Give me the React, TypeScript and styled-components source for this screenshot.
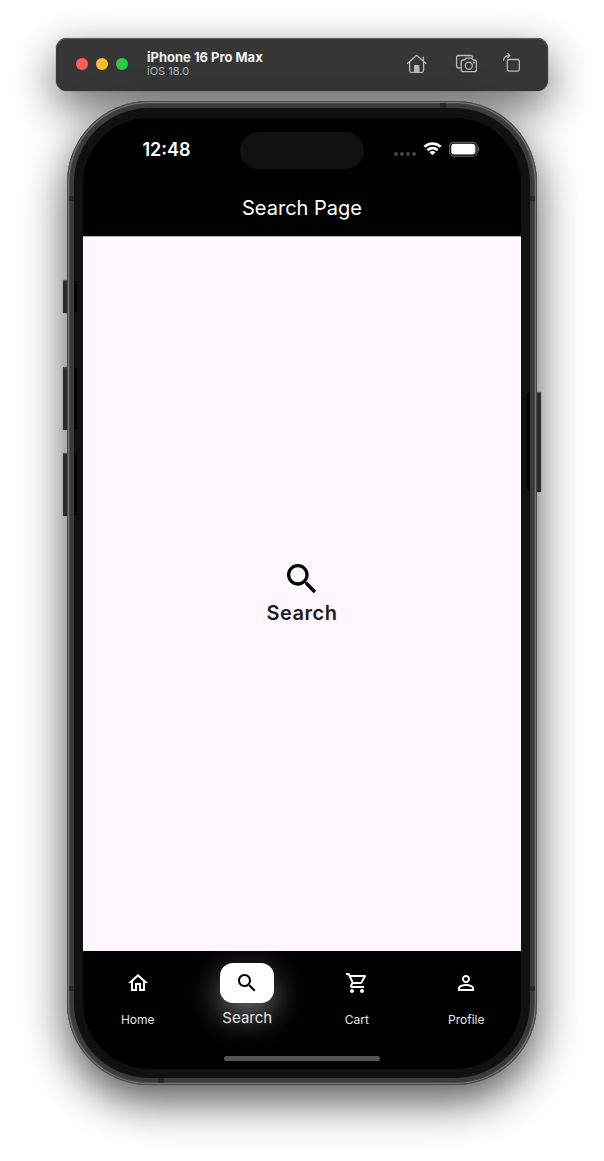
import React, { useState } from "react";
import styled, { createGlobalStyle, css } from "styled-components";

const GlobalStyle = createGlobalStyle`
  * { box-sizing: border-box; }
  body {
    margin: 0;
    background: #fff;
    font-family: Inter, "Liberation Sans", sans-serif;
  }
  button { font: inherit; color: inherit; background: none; border: 0; padding: 0; cursor: pointer; }
`;

const Page = styled.div`
  display: flex;
  flex-direction: column;
  min-height: 100vh;
  padding: 38px 56px 76px;
  overflow: hidden;
`;

const WindowBar = styled.header`
  display: flex;
  align-items: center;
  height: 53px;
  padding: 0 20px 2px;
  border-radius: 11px;
  background: #363636;
  box-shadow: inset 0 1px 1px #6a6a6a, 0 0 1px #222, 0 16px 44px rgba(0, 0, 0, 0.6);
`;

const Lights = styled.div`
  display: flex;
  gap: 8px;
  margin-right: 19px;
`;

const Light = styled.button<{ $color: string }>`
  width: 12px;
  height: 12px;
  border-radius: 50%;
  background: ${(p) => p.$color};
`;

const Device = styled.div`
  flex: 1;
`;

const DeviceName = styled.h1`
  margin: 0;
  font-size: 13px;
  line-height: 16px;
  font-weight: 700;
  color: #f2f2f2;
`;

const DeviceSystem = styled.p`
  margin: 0;
  font-size: 11px;
  line-height: 13px;
  color: #b4b4b4;
`;

const Tools = styled.div`
  display: flex;
  gap: 24px;
  color: #b9b9b9;
`;

const Tool = styled.button`
  display: flex;
`;

const Phone = styled.main`
  position: relative;
  flex: 1;
  display: flex;
  margin: 10px 11px 0;
  padding: 7px;
  border-radius: 82px;
  background: #3b3b3b;
  box-shadow: inset 0 0 0 1px #4a4a4a, inset 0 0 0 2px #777, inset 0 0 0 3px #484848,
    0 16px 44px rgba(0, 0, 0, 0.68);
`;

const Bezel = styled.div`
  flex: 1;
  display: flex;
  padding: 10px 9px 9px;
  border-radius: 75px;
  background: #111;
`;

const Screen = styled.div`
  position: relative;
  flex: 1;
  display: flex;
  flex-direction: column;
  border-radius: 66px;
  overflow: hidden;
  background: #000;
  color: #fff;
`;

const SideButton = styled.span<{ $side: "left" | "right"; $top: number; $length: number }>`
  position: absolute;
  ${(p) => p.$side}: -4px;
  top: ${(p) => p.$top}px;
  width: 4px;
  height: ${(p) => p.$length}px;
  border-radius: 1px;
  background: #2a2a2a;
  box-shadow: inset 0 1px 1px #555, 0 0 1px #333;

  &::after {
    content: "";
    position: absolute;
    top: 1px;
    bottom: 1px;
    ${(p) => p.$side}: 11px;
    width: 3px;
    background: #000;
  }
`;

const Antenna = styled.span<{ $edge: "left" | "right" | "top" | "bottom"; $at: string }>`
  position: absolute;
  background: rgba(32, 32, 32, 0.7);
  ${(p) => p.$edge}: 2px;
  ${(p) =>
    p.$edge === "left" || p.$edge === "right"
      ? css`
          top: ${p.$at};
          width: 5px;
          height: 5px;
        `
      : css`
          left: ${p.$at};
          width: 6px;
          height: 5px;
        `}
`;

const StatusBar = styled.div`
  display: grid;
  grid-template-columns: 1fr 124px 1fr;
  align-items: center;
  height: 62px;
  padding: 2px 0 0;
`;

const Time = styled.time`
  padding-left: 10px;
  text-align: center;
  font-size: 18px;
  line-height: 20px;
  font-weight: 600;
`;

const Island = styled.div`
  height: 37px;
  border-radius: 19px;
  background: #111;
`;

const StatusIcons = styled.div`
  display: flex;
  align-items: center;
  justify-content: center;
  gap: 7px;
  padding: 0 12px 2px 0;
`;

const AppBar = styled.h2`
  margin: 0;
  text-align: center;
  font-size: 20px;
  line-height: 56px;
  font-weight: 400;
`;

const Content = styled.section`
  flex: 1;
  display: flex;
  flex-direction: column;
  align-items: center;
  justify-content: center;
  padding-bottom: 2px;
  background: #fef7ff;
  color: #1d1b20;
  border-top: 1px solid #b3aeb4;
`;

const ContentLabel = styled.p`
  margin: 0;
  font-size: 20px;
  line-height: 28px;
  font-weight: 600;
  letter-spacing: 0.5px;
`;

const BottomBar = styled.footer`
  display: flex;
  flex-direction: column;
  align-items: center;
  justify-content: space-between;
  height: 118px;
  padding: 12px 0 8px;
`;

const Tabs = styled.nav`
  display: flex;
  align-self: stretch;
`;

const Tab = styled.button`
  flex: 1;
  display: flex;
  flex-direction: column;
  align-items: center;
`;

const TabIcon = styled.span<{ $active: boolean }>`
  display: flex;
  align-items: center;
  justify-content: center;
  width: 54px;
  height: 40px;
  border-radius: 13px;
  ${(p) =>
    p.$active &&
    css`
      background: #fff;
      color: #000;
      box-shadow: 0 12px 32px rgba(255, 255, 255, 0.45);
    `}
`;

const TabLabel = styled.span<{ $active: boolean }>`
  position: relative;
  font-size: ${(p) => (p.$active ? 15 : 12)}px;
  line-height: ${(p) => (p.$active ? 30 : 34)}px;
  color: #e6e6e6;
`;

const HomeIndicator = styled.div`
  width: 156px;
  height: 5px;
  border-radius: 3px;
  background: #555;
`;

const SEARCH =
  "M15.5 14h-.79l-.28-.27C15.41 12.59 16 11.11 16 9.5 16 5.91 13.09 3 9.5 3S3 5.91 3 9.5 5.91 16 9.5 16c1.61 0 3.09-.59 4.23-1.57l.27.28v.79l5 4.99L20.49 19l-4.99-5zm-6 0C7.01 14 5 11.99 5 9.5S7.01 5 9.5 5 14 7.01 14 9.5 11.99 14 9.5 14z";

const TABS = [
  { label: "Home", path: "M12 5.69l5 4.5V18h-2v-6H9v6H7v-7.81l5-4.5M12 3L2 12h3v8h6v-6h2v6h6v-8h3L12 3z" },
  { label: "Search", path: SEARCH },
  {
    label: "Cart",
    path: "M15.55 13c.75 0 1.41-.41 1.75-1.03l3.58-6.49c.37-.66-.11-1.48-.87-1.48H5.21l-.94-2H1v2h2l3.6 7.59-1.35 2.44C4.52 15.37 5.48 17 7 17h12v-2H7l1.1-2h7.45zM6.16 6h12.15l-2.76 5H8.53L6.16 6zM7 18c-1.1 0-1.99.9-1.99 2S5.9 22 7 22s2-.9 2-2-.9-2-2-2zm10 0c-1.1 0-1.99.9-1.99 2s.89 2 1.99 2 2-.9 2-2-.9-2-2-2z",
  },
  {
    label: "Profile",
    path: "M12 5.9c1.16 0 2.1.94 2.1 2.1s-.94 2.1-2.1 2.1S9.9 9.16 9.9 8s.94-2.1 2.1-2.1m0 9c2.97 0 6.1 1.46 6.1 2.1v1.1H5.9V17c0-.64 3.13-2.1 6.1-2.1M12 4C9.79 4 8 5.79 8 8s1.79 4 4 4 4-1.79 4-4-1.79-4-4-4zm0 9c-2.67 0-8 1.34-8 4v3h16v-3c0-2.66-5.33-4-8-4z",
  },
];

const Glyph = ({ path, size = 24, fill = "currentColor" }: { path: string; size?: number; fill?: string }) => (
  <svg width={size} height={size} viewBox="0 0 24 24" fill={fill} aria-hidden="true">
    <path d={path} />
  </svg>
);

const ToolGlyph = ({ children }: { children: React.ReactNode }) => (
  <svg
    width="26"
    height="24"
    viewBox="0 0 26 24"
    fill="none"
    stroke="currentColor"
    strokeWidth="1.3"
    strokeLinecap="round"
    strokeLinejoin="round"
    aria-hidden="true"
  >
    {children}
  </svg>
);

export default function App() {
  const [active, setActive] = useState("Search");
  return (
    <>
      <GlobalStyle />
      <Page>
        <WindowBar>
          <Lights>
            <Light $color="#ff5f57" aria-label="Close" />
            <Light $color="#febc2e" aria-label="Minimize" />
            <Light $color="#28c840" aria-label="Zoom" />
          </Lights>
          <Device>
            <DeviceName>iPhone 16 Pro Max</DeviceName>
            <DeviceSystem>iOS 18.0</DeviceSystem>
          </Device>
          <Tools>
            <Tool aria-label="Home">
              <ToolGlyph>
                <path d="M5.4 11.4 14 3.7q.6-.5 1.2 0l8.7 7.7M7.6 9.6v9.2q0 1.5 1.5 1.5h11q1.5 0 1.5-1.5V9.6M21.4 8.6V5.2" />
                <path d="M12.6 20v-6.3h4.2V20z" fill="currentColor" />
              </ToolGlyph>
            </Tool>
            <Tool aria-label="Screenshot">
              <ToolGlyph>
                <path d="M8.2 16H6.8q-2.2 0-2.2-2.2V5.7q0-2.2 2.2-2.2h11.6q2 0 2.2 2" />
                <path d="M11.2 8h1.2l1-1.2q.5-.6 1.3-.6h4.2q.8 0 1.3.6l1 1.2h1.2q2 0 2 2v7.7q0 2-2 2H11.2q-2 0-2-2V10q0-2 2-2z" />
                <circle cx="16.8" cy="13.7" r="3.5" />
                <circle cx="21.9" cy="10.6" r=".4" />
              </ToolGlyph>
            </Tool>
            <Tool aria-label="Rotate">
              <ToolGlyph>
                <rect x="5.3" y="7.5" width="12" height="11.6" rx="1.8" />
                <path d="M1.6 8.3Q1.8 3.6 7.6 3.6M5.8 1.6l2.1 2-2.1 2" />
              </ToolGlyph>
            </Tool>
          </Tools>
        </WindowBar>

        <Phone>
          <SideButton $side="left" $top={179} $length={33} />
          <SideButton $side="left" $top={266} $length={63} />
          <SideButton $side="left" $top={352} $length={63} />
          <SideButton $side="right" $top={291} $length={100} />
          <Antenna $edge="left" $at="95px" />
          <Antenna $edge="right" $at="95px" />
          <Antenna $edge="left" $at="calc(100% - 99px)" />
          <Antenna $edge="right" $at="calc(100% - 99px)" />
          <Antenna $edge="top" $at="calc(100% - 97px)" />
          <Antenna $edge="bottom" $at="91px" />
          <Bezel>
            <Screen>
              <StatusBar>
                <Time>12:48</Time>
                <Island />
                <StatusIcons>
                  <svg width="22" height="16" viewBox="0 0 22 16" fill="#444" aria-hidden="true">
                    <circle cx="2" cy="13" r="2" />
                    <circle cx="8" cy="13" r="2" />
                    <circle cx="14" cy="13" r="2" />
                    <circle cx="20" cy="13" r="2" />
                  </svg>
                  <svg width="19" height="14" viewBox="0 0 19 14" fill="#fff" aria-hidden="true">
                    <path d="M9.5 2.9c2.6 0 5 1 6.9 2.7.2.1.4.1.5 0l1.4-1.4c.2-.2.2-.4 0-.6-4.9-4.6-12.6-4.6-17.5 0-.2.2-.2.4 0 .6l1.4 1.4c.1.1.3.1.5 0 1.8-1.7 4.2-2.7 6.8-2.7z" />
                    <path d="M9.5 7.4c1.4 0 2.8.5 3.9 1.5.1.1.4.1.5 0l1.4-1.5c.2-.1.2-.4 0-.5-3.3-3-8.3-3-11.6 0-.2.1-.2.4 0 .5l1.4 1.5c.1.1.4.1.5 0 1.1-1 2.5-1.5 3.9-1.5z" />
                    <path d="M12.3 10.5c.1-.1.1-.4 0-.5-1.7-1.4-4-1.4-5.6 0-.2.1-.2.4 0 .5l2.5 2.5c.1.2.4.2.6 0z" />
                  </svg>
                  <svg width="31" height="16" viewBox="0 0 31 16" aria-hidden="true">
                    <rect x=".6" y="1.2" width="27.4" height="14" rx="4.3" fill="none" stroke="#6a6a6a" strokeWidth="1.1" />
                    <rect x="2.2" y="2.8" width="24.2" height="10.8" rx="3" fill="#fff" />
                    <path d="M29.1 6v4.5c1.5-.6 1.5-3.9 0-4.5z" fill="#777" />
                  </svg>
                </StatusIcons>
              </StatusBar>
              <AppBar>Search Page</AppBar>
              <Content>
                <Glyph path={SEARCH} size={40} fill="#000" />
                <ContentLabel>Search</ContentLabel>
              </Content>
              <BottomBar>
                <Tabs>
                  {TABS.map(({ label, path }) => (
                    <Tab key={label} onClick={() => setActive(label)}>
                      <TabIcon $active={label === active}>
                        <Glyph path={path} />
                      </TabIcon>
                      <TabLabel $active={label === active}>{label}</TabLabel>
                    </Tab>
                  ))}
                </Tabs>
                <HomeIndicator />
              </BottomBar>
            </Screen>
          </Bezel>
        </Phone>
      </Page>
    </>
  );
}
